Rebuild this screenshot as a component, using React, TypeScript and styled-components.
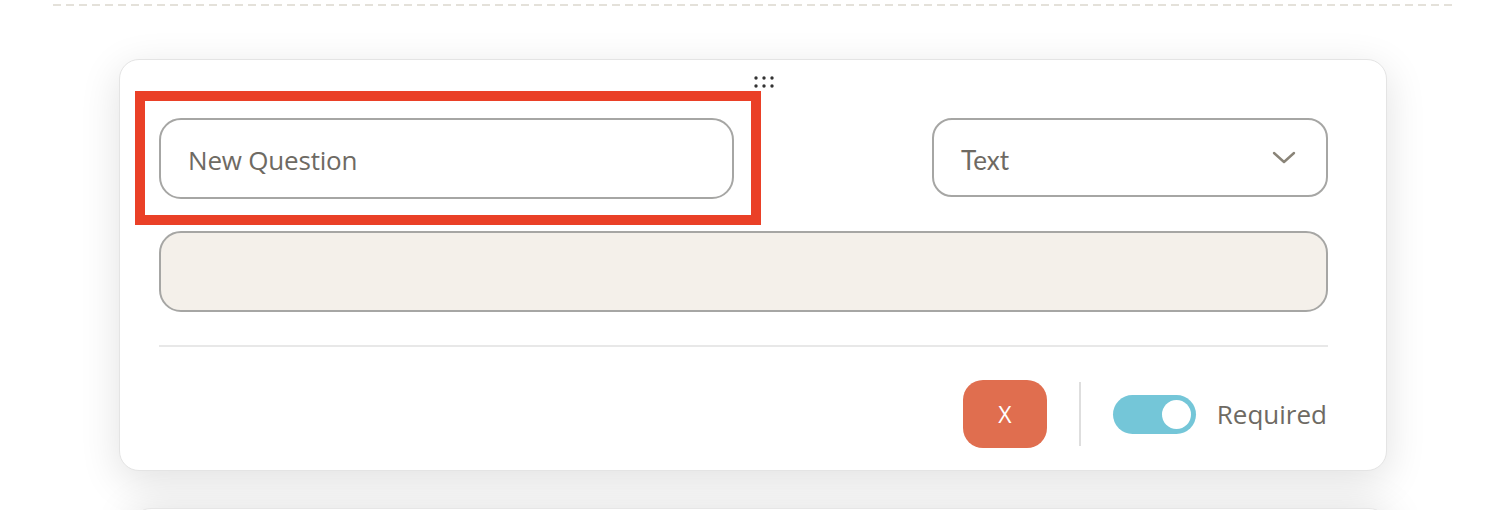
import styled, { createGlobalStyle } from "styled-components";

const GlobalStyle = createGlobalStyle`
  html, body {
    margin: 0;
    padding: 0;
    background: #ffffff;
  }
  body {
    font-family: "Open Sans", "Liberation Sans", sans-serif;
  }
`;

const txt = "#6e6a63";
const line = "#a6a6a4";

export default function App() {
  return (
    <>
      <GlobalStyle />
      <Page>
        <DashedRule />
        <Stack>
          <QuestionCard>
            <HandleRow>
              <DragHandle />
            </HandleRow>
            <TopRow>
              <Highlight>
                <QuestionInput defaultValue="New Question" />
              </Highlight>
              <TypeSelect>
                <span>Text</span>
                <Chevron />
              </TypeSelect>
            </TopRow>
            <AnswerBox />
            <Divider />
            <Footer>
              <DeleteButton>X</DeleteButton>
              <VSep />
              <Toggle on>
                <Knob />
              </Toggle>
              <ToggleLabel>Required</ToggleLabel>
            </Footer>
          </QuestionCard>
          <NextCard />
        </Stack>
      </Page>
    </>
  );
}

function DragHandle() {
  return (
    <svg width="20" height="12" viewBox="0 0 20 12">
      {[2, 10, 18].map((x) =>
        [2, 10].map((y) => (
          <circle key={`${x}-${y}`} cx={x} cy={y} r="1.7" fill="#333" />
        ))
      )}
    </svg>
  );
}

function Chevron() {
  return (
    <svg width="24" height="14" viewBox="0 0 24 14">
      <path
        d="M2 2 L12 11 L22 2"
        fill="none"
        stroke="#8a8478"
        strokeWidth="2.4"
        strokeLinecap="round"
        strokeLinejoin="round"
      />
    </svg>
  );
}

const Page = styled.div`
  width: 1504px;
  height: 510px;
  overflow: hidden;
  box-sizing: border-box;
  padding-top: 4px;
`;

const DashedRule = styled.div`
  margin-left: 53px;
  width: 1400px;
  height: 2px;
  background-image: repeating-linear-gradient(
    to right,
    #e4e1da 0 8px,
    transparent 8px 13px
  );
`;

const Stack = styled.div`
  display: flex;
  flex-direction: column;
  gap: 37px;
  padding: 53px 117px 0 119px;
`;

const QuestionCard = styled.div`
  width: 1268px;
  height: 412px;
  box-sizing: border-box;
  background: #fff;
  border: 1px solid #e4e4e4;
  border-radius: 20px;
  box-shadow: 0 10px 40px rgba(0, 0, 0, 0.12);
  padding: 16px 58px 0 39px;
  display: flex;
  flex-direction: column;
`;

const NextCard = styled.div`
  width: 1256px;
  margin-left: 12px;
  height: 200px;
  background: #fff;
  border: 1px solid #e6e6e6;
  border-radius: 20px;
  box-shadow: 0 0 40px rgba(0, 0, 0, 0.12);
`;

const HandleRow = styled.div`
  display: flex;
  justify-content: center;
  padding-left: 40px;
  height: 12px;
`;

const TopRow = styled.div`
  display: flex;
  justify-content: space-between;
  align-items: flex-start;
  margin-top: 30px;
`;

const Highlight = styled.div`
  position: relative;
  &::after {
    content: "";
    position: absolute;
    left: -24px;
    top: -27px;
    right: -27px;
    bottom: -26px;
    border: 10px solid #ea4027;
    pointer-events: none;
  }
`;

const QuestionInput = styled.input`
  display: block;
  width: 575px;
  height: 81px;
  box-sizing: border-box;
  border: 2px solid ${line};
  border-radius: 22px;
  padding: 3px 27px 0;
  font-family: "Open Sans", "Liberation Sans", sans-serif;
  font-size: 26px;
  letter-spacing: -0.2px;
  color: ${txt};
  background: #fff;
  outline: none;
`;

const TypeSelect = styled.div`
  width: 396px;
  height: 79px;
  box-sizing: border-box;
  border: 2px solid ${line};
  border-radius: 20px;
  padding: 4px 30px 0 27px;
  display: flex;
  align-items: center;
  justify-content: space-between;
  font-family: Lato, "Open Sans", sans-serif;
  font-size: 26px;
  color: ${txt};

  svg {
    margin-top: -4px;
  }
`;

const AnswerBox = styled.div`
  margin-top: 32px;
  height: 81px;
  box-sizing: border-box;
  border: 2px solid ${line};
  border-radius: 22px;
  background: #f4f0ea;
`;

const Divider = styled.div`
  margin-top: 33px;
  height: 2px;
  background: #e8e8e8;
`;

const Footer = styled.div`
  display: flex;
  justify-content: flex-end;
  align-items: center;
  margin-top: 33px;
  padding-right: 1px;
`;

const DeleteButton = styled.button`
  width: 84px;
  height: 68px;
  border: none;
  border-radius: 20px;
  background: #e06e4f;
  color: #fff;
  font-family: "Open Sans", "Liberation Sans", sans-serif;
  font-size: 23px;
  padding: 0;
`;

const VSep = styled.div`
  width: 2px;
  height: 64px;
  background: #dedede;
  margin: 0 32px 0 32px;
`;

const Toggle = styled.div<{ on?: boolean }>`
  width: 83px;
  height: 39px;
  border-radius: 20px;
  background: ${(p) => (p.on ? "#74c6d8" : "#ccc")};
  display: flex;
  align-items: center;
  justify-content: ${(p) => (p.on ? "flex-end" : "flex-start")};
  padding: 0 5px;
  box-sizing: border-box;
`;

const Knob = styled.div`
  width: 29px;
  height: 29px;
  border-radius: 50%;
  background: #fff;
`;

const ToggleLabel = styled.span`
  margin-left: 21px;
  font-family: "Open Sans", "Liberation Sans", sans-serif;
  font-size: 26px;
  color: ${txt};
`;
